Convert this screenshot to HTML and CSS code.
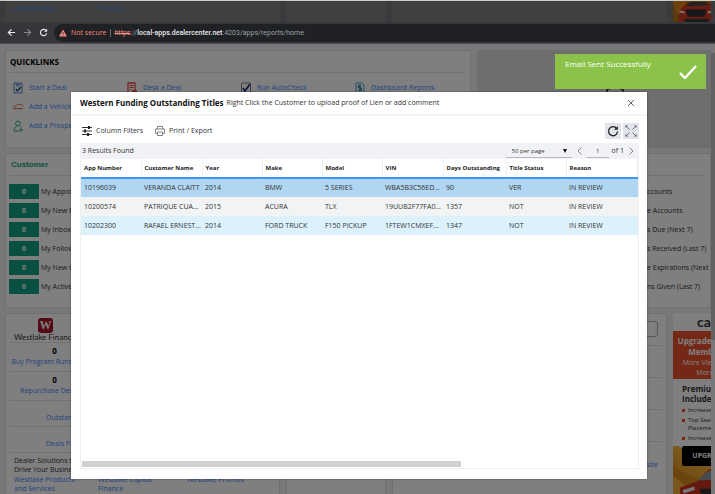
FILE: index.html
```html
<!DOCTYPE html>
<html lang="en">
<head>
    <meta charset="UTF-8">
    <title>DealerCenter - Home</title>
    <link rel="stylesheet" href="styles.css">
</head>
<body>
    <!-- end of the window above -->
    <div class="prev-window">
        <div class="prev-card prev-links">
            <a href="#">and Services</a>
            <a href="#">Finance</a>
        </div>
        <div class="prev-card prev-narrow"></div>
        <div class="prev-card prev-wide"></div>
        <svg class="prev-ad" viewBox="0 0 38 20" preserveAspectRatio="xMinYMin slice">
            <rect width="38" height="20" fill="#5b3a0c"/>
            <path d="M0 0h14L4 14z" fill="#6e430b"/>
            <path d="M6 9l6-6 5-2h16l5 3v16H5z" fill="#6a1d12"/>
            <path d="M13 3l4-2h14l3 3-20 1z" fill="#222"/>
            <path d="M12 8h20l-2 7H14z" fill="#17181a"/>
            <path d="M6 9l5 1v2l-5-1zM38 9l-5 1v2l5-1z" fill="#777"/>
            <path d="M10 17h24v3H12z" fill="#1b1b1b"/>
        </svg>
    </div>

    <div class="browser-bar">
        <button class="nav-btn" aria-label="Back"><svg viewBox="0 0 10 10"><path d="M9 5H2M5 1.500L1.500 5 5 8.500" stroke="#e6e8ea" stroke-width="1.300"/></svg></button>
        <button class="nav-btn" aria-label="Forward"><svg viewBox="0 0 10 10"><path d="M1 5h7M5 1.500L8.500 5 5 8.500" stroke="#85878a" stroke-width="1.300"/></svg></button>
        <button class="nav-btn" aria-label="Reload"><svg viewBox="0 0 10 10"><path d="M8 3A3.500 3.500 0 1 0 8.500 6" stroke="#e6e8ea" stroke-width="1.300"/><path d="M9 .8v3.400H5.600z" fill="#e6e8ea"/></svg></button>
        <div class="url-bar">
            <svg class="warn" viewBox="0 0 8 8"><path d="M4 .5L8 7.500H0z" fill="#f28b82"/><path d="M3.600 3h.8v2.200h-.8zM3.600 5.800h.8v.8h-.8z" fill="#202124"/></svg>
            <span class="not-secure">Not secure</span>
            <span class="url"><s>https</s>://<b>local-apps.dealercenter.net</b>:4203/apps/reports/home</span>
        </div>
    </div>

    <div class="page">
        <div class="row">
            <section class="card quicklinks">
                <h2>QUICKLINKS</h2>
                <div class="links">
                    <a href="#"><svg viewBox="0 0 10 12"><path d="M1 1h8v10H1zM3 1v1.500h4V1M3 4h4" fill="none" stroke="#5a8bd0"/><path d="M3 7l1.500 2L8 5" fill="none" stroke="#1c3f90" stroke-width="1.300"/></svg>Start a Deal</a>
                    <a href="#"><svg viewBox="0 0 10 12"><path d="M1 1h7v10H1z" fill="none" stroke="#ee4a42" stroke-width="1.300"/><path d="M2.500 3.500h4M2.500 5.500h4M2.500 7.500h2" stroke="#ee4a42"/><path d="M5 8h5v4H5z" fill="#ee4a42"/></svg>Desk a Deal</a>
                    <a href="#"><svg viewBox="0 0 10 12"><rect x=".5" y="1" width="9" height="10" rx="1" fill="none" stroke="#777"/><path d="M2 6l2 3 5-7" fill="none" stroke="#123070" stroke-width="1.700"/></svg>Run AutoCheck</a>
                    <a href="#"><svg viewBox="0 0 10 12"><path d="M1 1h6l2 2v8H1z" fill="none" stroke="#3fa0c8"/><path d="M6 3.500H3.500V6h3v2.500H3M5 2.500v7" fill="none" stroke="#167888"/></svg>Dashboard Reports</a>
                    <a href="#"><svg viewBox="0 0 10 12"><path d="M0 5.500l3-.7L4.500 3.500H9L10 5v2.500H0z" fill="none" stroke="#e8845c"/><circle cx="2.500" cy="7.700" r="1" fill="#e8845c"/><circle cx="7.500" cy="7.700" r="1" fill="#e8845c"/></svg>Add a Vehicle</a>
                    <i></i><i></i><i></i>
                    <a href="#"><svg viewBox="0 0 10 12"><circle cx="5" cy="3.500" r="2.400" fill="none" stroke="#38a88c"/><path d="M3.500 6.500C1.500 7.500 1 9 1 11h5M7 6.500l1 1M8 8v4M6 10h4" fill="none" stroke="#38a88c"/></svg>Add a Prospect</a>
                </div>
            </section>
            <div class="banner">
                <svg viewBox="0 0 20 12"><path d="M5 1H2v9M15 1h3v9M7 6v4M13 6v4" fill="none" stroke="#222" stroke-width="1.500"/></svg>
            </div>
        </div>

        <div class="row">
            <section class="card customer">
                <h2>Customer</h2>
                <ul>
                    <li><b>0</b>My Appointments</li>
                    <li><b>0</b>My New Prospects</li>
                    <li><b>0</b>My Inbox</li>
                    <li><b>0</b>My Followups</li>
                    <li><b>0</b>My New Credit Apps</li>
                    <li><b>0</b>My Active Prospects</li>
                </ul>
            </section>
            <section class="card accounts">
                <h2>&nbsp;</h2>
                <ul>
                    <li>ccounts</li>
                    <li>e Accounts</li>
                    <li>s Due (Next 7)</li>
                    <li>s Received (Last 7)</li>
                    <li>e Expirations (Next 30)</li>
                    <li>ns Given (Last 7)</li>
                </ul>
            </section>
        </div>

        <div class="row lower">
            <section class="card westlake">
                <div class="brand">
                    <span class="brand-mark">W</span>
                    <span class="brand-name">Westlake Financial</span>
                </div>
                <div class="stat"><b>0</b><a href="#">Buy Program Runs (Today)</a></div>
                <div class="stat"><b>0</b><a href="#">Repurchase Demand</a></div>
                <div class="stat wide"><a href="#">Outstanding Titles</a></div>
                <div class="stat wide"><a href="#">Deals Paid</a></div>
                <div class="solutions">
                    <p>Dealer Solutions to<br>Drive Your Business</p>
                    <div class="solution-links">
                        <a href="#">Westlake Products<br>and Services</a>
                        <a href="#">Westlake Capital<br>Finance</a>
                        <a href="#">Westlake Promos</a>
                    </div>
                </div>
            </section>
            <section class="card narrow"></section>
            <section class="card search">
                <div class="search-row"><input type="text" aria-label="Search"></div>
                <div class="search-row"></div>
                <div class="search-row"></div>
                <div class="search-row"></div>
                <a href="#">Website</a>
            </section>
            <aside class="ad">
                <div class="ad-logo">cars</div>
                <div class="ad-head"><b>Upgrade Your<br>Member</b><br>More Views &amp;<br>More</div>
                <div class="ad-body">
                    <b>Premium<br>Includes</b>
                    <ul>
                        <li>Increased</li>
                        <li>Top Search<br>Placement</li>
                        <li>Increased</li>
                    </ul>
                </div>
                <div class="ad-foot">
                    <button>UPGRADE</button>
                    <svg viewBox="0 0 60 30">
                        <path d="M0 0l22 12L6 30H0z" fill="#d98a1c"/>
                        <path d="M0 8l14 12-8 10H0z" fill="#f0b040"/>
                        <path d="M6 18l14-5 10-10h26l4 8v19H6z" fill="#c8301c"/>
                        <path d="M20 12l10-8h26l4 7z" fill="#8a969c"/>
                        <path d="M8 20l10-3v3l-9 3z" fill="#eee"/>
                        <path d="M22 19h38v5H24z" fill="#333"/>
                    </svg>
                </div>
            </aside>
        </div>
        <div class="page-scroll"><span></span></div>
        <div class="overlay"></div>
    </div>

    <div class="modal" role="dialog" aria-labelledby="modal-title">
        <header class="modal-head">
            <h1 id="modal-title">Western Funding Outstanding Titles</h1>
            <span>Right Click the Customer to upload proof of Lien or add comment</span>
            <button class="close" aria-label="Close"><svg viewBox="0 0 8 8"><path d="M1 1l6 6M7 1L1 7" stroke="#666"/></svg></button>
        </header>
        <div class="modal-body">
            <div class="toolbar">
                <button class="tool"><svg viewBox="0 0 10 10"><path d="M0 1.500h10M0 5h10M0 8.500h10" stroke="#333"/><path d="M6 0h2v3H6zM2 3.500h2v3H2zM5 7h2v3H5z" fill="#222"/></svg>Column Filters</button>
                <button class="tool"><svg viewBox="0 0 10 10"><path d="M2.500 3V.5h5V3M2.500 7.500h-2V3h9v4.500h-2M2.500 6h5v3.500h-5z" fill="none" stroke="#666" stroke-width=".8"/></svg>Print / Export</button>
                <div class="tool-right">
                    <button class="square" aria-label="Refresh"><svg viewBox="0 0 12 12"><path d="M9.600 3.500A4.500 4.500 0 1 0 10.500 6.500" fill="none" stroke="#222" stroke-width="1.300"/><path d="M10.800 1v3.800H7z" fill="#222"/></svg></button>
                    <button class="square" aria-label="Full screen"><svg viewBox="0 0 12 12"><path d="M4.500 4.500L1 1M7.500 4.500L11 1M4.500 7.500L1 11M7.500 7.500L11 11" stroke="#666" stroke-width=".9"/><path d="M.5.5h2.500l-2.500 2.500zM11.500.5v2.500l-2.500-2.500zM.5 11.500v-2.500l2.500 2.500zM11.500 11.500h-2.500l2.500-2.500z" fill="#555"/></svg></button>
                </div>
            </div>
            <div class="results">
                <span>3 Results Found</span>
                <div class="pager">
                    <div class="per-page">
                        <select aria-label="Rows per page">
                            <option>50 per page</option>
                        </select>
                        <svg viewBox="0 0 4 4"><path d="M0 0h4L2 4z" fill="#111"/></svg>
                    </div>
                    <button aria-label="Previous page"><svg viewBox="0 0 5 8"><path d="M4.500 .5L1 4l3.500 3.500" fill="none" stroke="#777" stroke-width=".9"/></svg></button>
                    <input type="text" value="1" aria-label="Page">
                    <span>of 1</span>
                    <button aria-label="Next page"><svg viewBox="0 0 5 8"><path d="M.5 .5L4 4 .5 7.500" fill="none" stroke="#777" stroke-width=".9"/></svg></button>
                </div>
            </div>
            <div class="grid">
                <table>
                    <colgroup>
                        <col class="c60"><col class="c61"><col class="c60"><col class="c60"><col class="c60"><col class="c61"><col class="c63"><col class="c60"><col>
                    </colgroup>
                    <thead>
                        <tr>
                            <th>App Number</th>
                            <th>Customer Name</th>
                            <th>Year</th>
                            <th>Make</th>
                            <th>Model</th>
                            <th>VIN</th>
                            <th>Days Outstanding</th>
                            <th>Title Status</th>
                            <th>Reason</th>
                        </tr>
                    </thead>
                    <tbody>
                        <tr class="selected">
                            <td>10196039</td><td>VERANDA CLAITT</td><td>2014</td><td>BMW</td><td>5 SERIES</td><td>WBA5B3C56ED...</td><td>90</td><td>VER</td><td>IN REVIEW</td>
                        </tr>
                        <tr>
                            <td>10200574</td><td>PATRIQUE CUA...</td><td>2015</td><td>ACURA</td><td>TLX</td><td>19UUB2F77FA0...</td><td>1357</td><td>NOT</td><td>IN REVIEW</td>
                        </tr>
                        <tr class="hover">
                            <td>10202300</td><td>RAFAEL ERNEST...</td><td>2014</td><td>FORD TRUCK</td><td>F150 PICKUP</td><td>1FTEW1CMXEF...</td><td>1347</td><td>NOT</td><td>IN REVIEW</td>
                        </tr>
                    </tbody>
                </table>
                <div class="grid-scroll"></div>
            </div>
        </div>
    </div>

    <div class="toast" role="status">
        <span>Email Sent Successfully</span>
        <svg viewBox="0 0 18 14"><path d="M1 8l5 5L17 1" fill="none" stroke="#fff" stroke-width="2.400"/></svg>
    </div>
</body>
</html>
```

FILE: styles.css
```css
* {
    box-sizing: border-box;
}
body {
    margin: 0;
    height: 100vh;
    display: flex;
    flex-direction: column;
    position: relative;
    overflow: hidden;
    font-family: "Open Sans", "Noto Sans", sans-serif;
    font-size: 7px;
    line-height: 10px;
    color: #333;
}
h1, h2, p, ul {
    margin: 0;
    padding: 0;
}
ul {
    list-style: none;
}
a {
    color: #3a86ff;
    text-decoration: none;
}
button, input, select {
    font: inherit;
    color: inherit;
    border: none;
    background: none;
    padding: 0;
    margin: 0;
}
svg {
    display: block;
    flex: none;
}

/* strip of the window above */
.prev-window {
    flex: none;
    display: flex;
    gap: 6px;
    height: 22px;
    padding: 0 4px 0 5px;
    background: #3a3b3c;
    border-top: 1px solid #c9cdc9;
    overflow: hidden;
}
.prev-card {
    background: #404040;
}
.prev-links {
    width: 275px;
    padding: 3px 9px;
    display: flex;
}
.prev-links a {
    width: 84px;
    color: #1d4078;
}
.prev-narrow {
    width: 100px;
}
.prev-wide {
    flex: 1;
}
.prev-ad {
    width: 38px;
    height: 21px;
}

/* address bar */
.browser-bar {
    flex: none;
    display: flex;
    align-items: center;
    height: 22px;
    padding-left: 3px;
    background: #35363a;
    border-bottom: 1px solid #4d4e50;
}
.nav-btn {
    width: 16px;
}
.nav-btn svg {
    width: 9px;
    height: 9px;
    margin: 0 auto;
    fill: none;
}
.url-bar {
    flex: 1;
    display: flex;
    align-items: center;
    height: 18px;
    margin-left: 3px;
    padding-left: 5px;
    border-radius: 9px 0 0 9px;
    background: #202124;
    color: #9aa0a6;
    white-space: nowrap;
}
.warn {
    width: 8px;
    height: 8px;
    margin-right: 4px;
}
.not-secure {
    color: #f28b82;
    padding-right: 3px;
    margin-right: 4px;
    border-right: 1px solid #6b6d70;
    line-height: 8px;
}
.url {
    font-family: Roboto, sans-serif;
}
.url s {
    color: #f28b82;
}
.url b {
    color: #e8eaed;
    font-weight: 500;
}

/* dashboard */
.page {
    flex: 1;
    min-height: 0;
    display: flex;
    flex-direction: column;
    gap: 5px;
    padding: 6px 4px 0 5px;
    position: relative;
    overflow: hidden;
    background: #edf0f4;
}
.overlay {
    position: absolute;
    inset: 0;
    background: rgba(0, 0, 0, 0.5);
}
.row {
    display: flex;
    flex: none;
    gap: 6px;
}
.card {
    background: #fff;
    border: 1px solid #dde1e8;
    padding: 0 4px;
}
.card h2 {
    font-size: 8px;
    line-height: 21px;
    border-bottom: 1px solid #e4e4e4;
}
.quicklinks {
    width: 66%;
}
.quicklinks h2 {
    color: #000;
}
.links {
    display: grid;
    grid-template-columns: repeat(4, 1fr);
    grid-auto-rows: 19px;
    padding: 5px 0 12px;
}
.links a {
    display: flex;
    align-items: center;
    gap: 6px;
    padding-left: 3px;
    white-space: nowrap;
}
.links svg {
    width: 10px;
    height: 12px;
}
.banner {
    flex: 1;
    background: #dcdcdc;
    padding-top: 38px;
}
.banner svg {
    width: 20px;
    height: 12px;
    margin: 0 0 0 128px;
}
.customer {
    width: 275px;
    padding: 0 3px;
}
.customer h2 {
    font-family: "Liberation Sans", Arial, sans-serif;
    padding-left: 2px;
    color: #12a184;
}
.customer ul, .accounts ul {
    padding: 6px 0 11px;
}
.customer li, .accounts li {
    display: flex;
    align-items: center;
    gap: 2px;
    height: 19px;
    white-space: nowrap;
}
.customer li b {
    width: 30px;
    line-height: 15px;
    text-align: center;
    background: #12a184;
    color: #fff;
}
.accounts {
    flex: 1;
    overflow: hidden;
}
.accounts .accounts ul, .accounts ul {
    padding-left: 356px;
}
.lower {
    flex: 1;
}
.westlake {
    width: 275px;
}
.brand {
    height: 29px;
    padding-top: 4px;
    display: flex;
    flex-direction: column;
    align-items: flex-start;
    border-bottom: 1px solid #e4e4e4;
}
.brand-mark {
    width: 15px;
    margin-left: 28px;
    border-radius: 3px;
    background: #a81428;
    color: #fff;
    font: bold 12px/15px "Liberation Serif", serif;
    text-align: center;
}
.brand-name {
    margin-left: 4px;
    font-family: Lato, sans-serif;
    font-size: 8px;
    line-height: 8px;
    white-space: nowrap;
}
.stat {
    display: flex;
    flex-direction: column;
    align-items: center;
    gap: 1px;
    height: 29px;
    padding: 3px 176px 0 0;
    border-bottom: 1px solid #e4e4e4;
    white-space: nowrap;
}
.stat b {
    font-size: 8px;
    color: #000;
}
.stat.wide {
    align-items: flex-start;
    justify-content: flex-end;
    height: 26px;
    padding: 0 0 3px 36px;
}
.solutions {
    padding: 3px 4px;
    line-height: 9px;
}
.solution-links {
    display: flex;
    padding-top: 1px;
}
.solution-links a {
    width: 84px;
}
.solution-links a:last-child {
    margin-left: 5px;
}
.narrow {
    width: 100px;
}
.search {
    flex: 1;
}
.search-row {
    height: 32px;
    padding: 7px 4px 0;
    border-bottom: 1px solid #e4e4e4;
}
.search-row input {
    width: 100%;
    height: 16px;
    border: 1px solid #aaa;
    border-radius: 3px;
}
.search > a {
    display: block;
    padding: 18px 4px 0;
    text-align: right;
}
.ad {
    width: 38px;
    overflow: hidden;
    white-space: nowrap;
    background: #fff;
}
.ad-logo {
    padding-left: 24px;
    font: bold 14px/18px Lato, sans-serif;
    color: #333;
}
.ad-head {
    width: 64px;
    height: 48px;
    padding-top: 5px;
    background: #e8512a;
    color: #fff;
    line-height: 10px;
    text-align: center;
}
.ad-head b {
    font-size: 8px;
}
.ad-body {
    width: 72px;
    padding: 5px 8px 2px 9px;
    line-height: 8px;
}
.ad-body b {
    display: block;
    font-size: 8px;
    line-height: 10px;
    margin-bottom: 2px;
}
.ad-body li {
    position: relative;
    padding: 0 0 2px 6px;
    font-size: 6px;
}
.ad-body li::before {
    content: "";
    position: absolute;
    left: 0;
    top: 3px;
    width: 3px;
    height: 3px;
    background: #e8512a;
}
.ad-foot {
    width: 72px;
    background: linear-gradient(30deg, #d98a1c 20%, #f7b63c 60%, #fff 61%);
}
.ad-foot button {
    display: block;
    width: 54px;
    height: 20px;
    margin: 0 auto;
    border-radius: 2px;
    background: #000;
    color: #fff;
    font-weight: bold;
}
.ad-foot svg {
    width: 72px;
    height: 36px;
}
.page-scroll {
    position: absolute;
    top: 0;
    right: 0;
    width: 4px;
    height: 100%;
    padding-top: 9px;
    background: #f1f1f1;
}
.page-scroll span {
    display: block;
    height: 65%;
    background: #c4c4c4;
}

/* titles dialog */
.modal {
    position: absolute;
    top: 92px;
    right: 68px;
    bottom: 15px;
    left: 71px;
    display: flex;
    flex-direction: column;
    background: #fff;
    box-shadow: 0 0 2px rgba(0, 0, 0, 0.4);
}
.modal-head {
    display: flex;
    align-items: center;
    gap: 3px;
    height: 24px;
    padding: 0 12px 0 9px;
    border-bottom: 2px solid #f3f4f6;
    white-space: nowrap;
}
.modal-head h1 {
    font-size: 8px;
    line-height: 10px;
    color: #111;
}
.close {
    margin-left: auto;
}
.close svg {
    width: 8px;
    height: 8px;
}
.modal-body {
    flex: 1;
    min-height: 0;
    display: flex;
    flex-direction: column;
    padding: 0 8px 10px 9px;
}
.toolbar {
    display: flex;
    align-items: center;
    gap: 12px;
    height: 27px;
    padding-left: 2px;
    padding-top: 2px;
}
.tool {
    display: flex;
    align-items: center;
    gap: 4px;
}
.tool svg {
    width: 10px;
    height: 10px;
}
.tool-right {
    display: flex;
    gap: 2px;
    margin-left: auto;
}
.square {
    width: 16px;
    height: 16px;
    padding: 2px;
    background: #e1e4ea;
}
.results {
    display: flex;
    align-items: center;
    justify-content: space-between;
    height: 16px;
    padding: 0 5px 0 2px;
    background: #f1f2f6;
}
.pager {
    display: flex;
    align-items: center;
    gap: 5px;
}
.pager button svg {
    width: 5px;
    height: 8px;
}
.pager input {
    width: 22px;
    height: 14px;
    text-align: center;
    font-size: 6px;
    border-bottom: 1px solid #bbb;
}
.pager span {
    margin-left: -2px;
}
.per-page {
    position: relative;
}
.per-page select {
    appearance: none;
    display: block;
    width: 66px;
    height: 14px;
    padding-left: 6px;
    font-size: 6px;
    border-bottom: 1px solid #bbb;
    border-radius: 0;
}
.per-page svg {
    position: absolute;
    top: 5px;
    right: 5px;
    width: 4px;
    height: 4px;
    pointer-events: none;
}
.grid {
    flex: 1;
    display: flex;
    flex-direction: column;
    justify-content: space-between;
    border: 1px solid #eef0f2;
    border-top: none;
}
table {
    width: 100%;
    table-layout: fixed;
    border-collapse: collapse;
}
.c60 {
    width: 60px;
}
.c61 {
    width: 61px;
}
.c63 {
    width: 63px;
}
th, td {
    padding: 0 0 0 3px;
    height: 19px;
    text-align: left;
    white-space: nowrap;
    overflow: hidden;
}
th {
    font-size: 6px;
    color: #222;
    border-right: 1px solid #eef0f2;
    border-bottom: 2px solid #3f97ee;
}
tbody tr {
    background: #f2f3f5;
}
tbody .selected {
    background: #b1d6f1;
}
tbody .hover {
    background: #dcf1fc;
}
.grid-scroll {
    width: 68%;
    height: 6px;
    margin: 0 0 1px 1px;
    background: #d0d0d0;
}

/* notification */
.toast {
    position: absolute;
    top: 54px;
    right: 9px;
    width: 151px;
    height: 35px;
    padding: 5px 9px 0 10px;
    display: flex;
    justify-content: space-between;
    background: #8bc34a;
    color: #fff;
    font-size: 8px;
}
.toast svg {
    width: 18px;
    height: 14px;
    margin-top: 6px;
}
```
